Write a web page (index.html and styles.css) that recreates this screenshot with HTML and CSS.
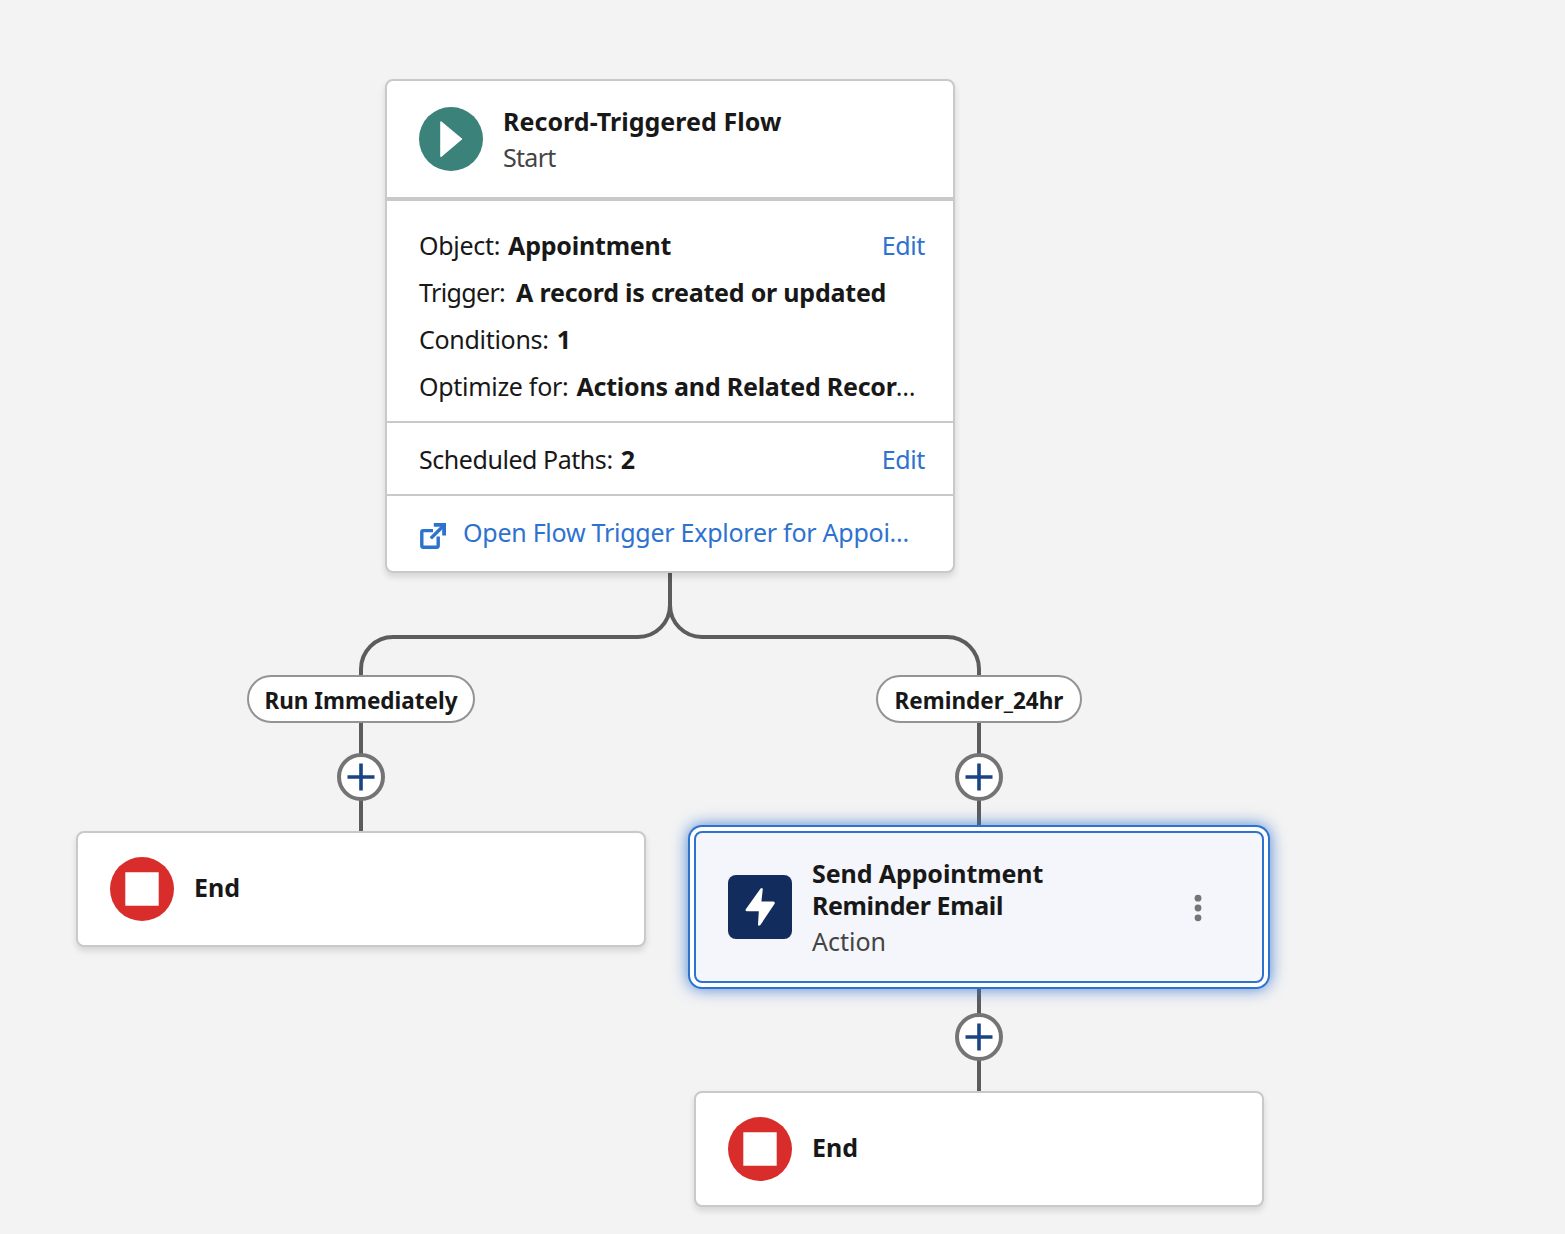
FILE: index.html
```html
<!DOCTYPE html>
<html lang="en">
<head>
<meta charset="utf-8">
<title>Flow Builder</title>
<link rel="stylesheet" href="styles.css">
</head>
<body>
<main class="canvas">
  <svg class="connectors" width="1565" height="1234" viewBox="0 0 1565 1234" fill="none" aria-hidden="true">
    <path d="M670 573V605A32 32 0 0 1 638 637H393A32 32 0 0 0 361 669V831"/>
    <path d="M670 573V605A32 32 0 0 0 702 637H947A32 32 0 0 1 979 669V1091"/>
  </svg>

  <section class="node card start-node">
    <header class="card-head start-head">
      <svg class="icon" viewBox="0 0 64 64" aria-hidden="true"><circle cx="32" cy="32" r="32" fill="#3b827b"/><path d="M22 15.2V49.2L42.4 32Z" fill="#fff" stroke="#fff" stroke-width="1.6" stroke-linejoin="round"/></svg>
      <div class="titles">
        <h2 class="title"><span class="t-flow">Record-Triggered Flow</span></h2>
        <p class="subtitle s-start">Start</p>
      </div>
    </header>
    <div class="group details">
      <p class="row"><span class="label">Object:</span><b>Appointment</b><a class="edit">Edit</a></p>
      <p class="row"><span class="label l-trigger">Trigger:</span><b>A record is created or updated</b></p>
      <p class="row"><span class="label">Conditions:</span><b>1</b></p>
      <p class="row"><span class="label">Optimize for:</span><b>Actions and Related Recor</b><span class="dots">…</span></p>
    </div>
    <div class="group scheduled">
      <p class="row"><span class="label l-paths">Scheduled Paths:</span><b>2</b><a class="edit">Edit</a></p>
    </div>
    <div class="group explorer">
      <svg class="link-icon" viewBox="0 0 26 26" fill="none" stroke="#2e72cf" aria-hidden="true"><path d="M13 7.6H3.2Q1.8 7.6 1.8 9V22.8Q1.8 24.2 3.2 24.2H16.8Q18.2 24.2 18.2 22.8V13.5" stroke-width="3.4"/><path d="M10.8 15.4L23 3.2" stroke-width="3.4"/><path d="M13.8 1.9H24.1V12.4" stroke-width="3.8"/></svg>
      <a class="explorer-link">Open Flow Trigger Explorer for Appoi...</a>
    </div>
  </section>

  <div class="node pill pill-now"><span>Run Immediately</span></div>
  <div class="node pill pill-reminder"><span>Reminder_24hr</span></div>

  <button class="node add add-a" aria-label="Add element"><svg viewBox="0 0 28 28"><path d="M14 .5V27.5M.5 14H27.5"/></svg></button>
  <button class="node add add-b" aria-label="Add element"><svg viewBox="0 0 28 28"><path d="M14 .5V27.5M.5 14H27.5"/></svg></button>
  <button class="node add add-c" aria-label="Add element"><svg viewBox="0 0 28 28"><path d="M14 .5V27.5M.5 14H27.5"/></svg></button>

  <section class="node card end-a">
    <div class="card-head">
      <svg class="icon" viewBox="0 0 64 64" aria-hidden="true"><circle cx="32" cy="32" r="32" fill="#d92d2b"/><path d="M15.3 15.3H48.7V48.7H15.3Z" fill="#fff"/></svg>
      <h2 class="title t-end">End</h2>
    </div>
  </section>

  <section class="node card action-node">
    <div class="card-head">
      <svg class="icon" viewBox="0 0 64 64" aria-hidden="true"><rect width="64" height="64" rx="8" fill="#132c5e"/><path d="M32.6 13.6L17.8 34.2Q17 36.3 19 36.3H30.8L30 49.8Q30.6 51.6 32.4 50L46.6 28.8Q47.4 26.6 45.3 26.4H33.4L34.8 14Q34.2 12.4 32.6 13.6Z" fill="#fff"/></svg>
      <div class="titles">
        <h2 class="title"><span class="t-send">Send Appointment</span><br><span class="t-email">Reminder Email</span></h2>
        <p class="subtitle">Action</p>
      </div>
      <svg class="more" viewBox="0 0 8 28" fill="#757575" aria-hidden="true"><circle cx="4" cy="4.2" r="3.4"/><circle cx="4" cy="14" r="3.4"/><circle cx="4" cy="23.8" r="3.4"/></svg>
    </div>
  </section>

  <section class="node card end-b">
    <div class="card-head">
      <svg class="icon" viewBox="0 0 64 64" aria-hidden="true"><circle cx="32" cy="32" r="32" fill="#d92d2b"/><path d="M15.3 15.3H48.7V48.7H15.3Z" fill="#fff"/></svg>
      <h2 class="title t-end">End</h2>
    </div>
  </section>
</main>
</body>
</html>
```
FILE: styles.css
```css
* { box-sizing: border-box; }
body {
  margin: 0;
  background: #f3f3f3;
  color: #181818;
  font: 25px/32px "Noto Sans", "Open Sans", sans-serif;
}
h2, p { margin: 0; font-size: inherit; }
.canvas { position: relative; width: 1565px; height: 1234px; overflow: hidden; }
.connectors { position: absolute; inset: 0; stroke: #5c5c5c; stroke-width: 4; }
.node { position: absolute; }

.card {
  width: 570px;
  background: #fff;
  border: 2px solid #c9c9c9;
  border-radius: 8px;
  box-shadow: 0 4px 6px rgba(0, 0, 0, .12);
}
.start-node { left: 385px; top: 79px; height: 494px; }
.end-a { left: 76px; top: 831px; height: 116px; }
.end-b { left: 694px; top: 1091px; height: 116px; }
.action-node {
  left: 694px; top: 831px; height: 152px;
  background: #f4f6fb;
  border-color: #2e72cf;
  box-shadow: 0 0 0 4px #fff, 0 0 0 6px #2e72cf, 0 0 16px 6px rgba(46, 114, 207, .85);
}

.card-head { display: flex; align-items: center; height: 100%; padding: 0 60px 0 32px; gap: 20px; }
.start-head { height: 116px; }
.icon { width: 64px; height: 64px; flex: none; }
.title { font-weight: 700; white-space: nowrap; }
.t-flow { letter-spacing: .05px; }
.t-send { letter-spacing: -.1px; }
.t-email { letter-spacing: -.36px; }
.t-end { padding-bottom: 4px; }
.subtitle { color: #444; margin-top: 4px; }
.s-start { letter-spacing: -.7px; }
.more { width: 8px; height: 28px; margin: 2px 0 0 auto; }

.group { border-top: 2px solid #c9c9c9; padding-left: 32px; padding-right: 28px; }
.details { border-top-width: 4px; height: 224px; padding-top: 20px; }
.scheduled { height: 73px; padding-top: 12px; }
.explorer { height: 77px; display: flex; align-items: center; gap: 17px; padding-left: 33px; }
.row { display: flex; align-items: center; height: 47px; white-space: nowrap; }
.row b { letter-spacing: -.22px; }
.label { margin-right: 8px; letter-spacing: -.3px; }
.l-trigger { margin-right: 11px; letter-spacing: -.65px; }
.l-paths { letter-spacing: -.45px; }
.dots { margin-left: -1px; letter-spacing: -.3px; }
.edit { margin-left: auto; letter-spacing: -.4px; }
.edit, .explorer-link { color: #2e72cf; white-space: nowrap; }
.explorer-link { letter-spacing: -.26px; padding-bottom: 3px; }
.link-icon { width: 26px; height: 26px; flex: none; margin-top: 4px; }

.pill {
  height: 48px; top: 675px;
  display: flex; align-items: center; justify-content: center;
  padding-top: 4px;
  border: 2px solid #939393; border-radius: 24px;
  background: #fff;
  font-size: 22.5px; font-weight: 700; white-space: nowrap;
}
.pill-now { left: 247px; width: 228px; }
.pill-reminder { left: 876px; width: 206px; }

.add {
  width: 48px; height: 48px; padding: 0;
  display: flex; align-items: center; justify-content: center;
  border: 4px solid #747474; border-radius: 50%;
  background: #fff;
}
.add svg { width: 28px; height: 28px; stroke: #1b4483; stroke-width: 3.6; }
.add-a { left: 337px; top: 753px; }
.add-b { left: 955px; top: 753px; }
.add-c { left: 955px; top: 1013px; }
```
